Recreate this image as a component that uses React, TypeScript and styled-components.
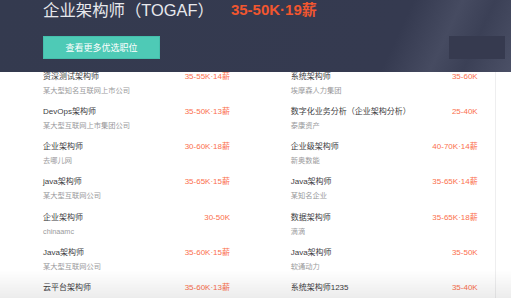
import React from "react";
import styled, { createGlobalStyle } from "styled-components";

const Global = createGlobalStyle`
  html, body { margin: 0; padding: 0; background: #ffffff; overflow: hidden; }
  body { font-family: "Liberation Sans", "Noto Sans CJK SC", sans-serif; }
`;

const Page = styled.div`
  width: 511px;
  height: 298px;
  position: relative;
  overflow: hidden;
  background: #ffffff;
`;

const Header = styled.header`
  position: sticky;
  top: 0;
  z-index: 2;
  height: 72px;
  box-sizing: border-box;
  padding-left: 43px;
  padding-right: 6px;
  display: flex;
  flex-direction: column;
  background: linear-gradient(
    115deg,
    #343a4f 0%,
    #353a50 76%,
    #464b61 85%,
    #3b4056 91%,
    #4b5066 100%
  );
`;

const TitleRow = styled.div`
  display: flex;
  align-items: center;
  height: 20px;
  gap: 17px;
`;

const JobTitle = styled.h1`
  margin: 0;
  font-size: 16.4px;
  line-height: 20px;
  font-weight: 400;
  color: #e7e8ec;
  white-space: nowrap;
`;

const HeadSalary = styled.span`
  font-size: 15px;
  line-height: 20px;
  font-weight: 700;
  color: #f1562f;
  white-space: nowrap;
`;

const ActionRow = styled.div`
  margin-top: 16px;
  display: flex;
  justify-content: space-between;
  align-items: center;
`;

const MoreButton = styled.button`
  width: 117px;
  height: 23px;
  box-sizing: border-box;
  border: 1px solid #45bfac;
  background: #4ecab6;
  color: #ffffff;
  font-family: inherit;
  font-size: 9px;
  padding: 0;
  cursor: pointer;
`;

const SideBlock = styled.div`
  width: 56px;
  height: 23px;
  background: #363a4f;
`;

const Panel = styled.main`
  width: 496px;
  box-sizing: border-box;
  border-right: 1px solid #eeeeef;
  padding-left: 43px;
  min-height: 226px;
`;

const JobGrid = styled.div`
  display: grid;
  grid-template-columns: 187px 187px;
  column-gap: 60.7px;
  grid-auto-rows: 35.17px;
`;

const JobItem = styled.div`
  display: grid;
  grid-template-columns: 1fr auto;
  grid-template-rows: 10px 18px;
  align-items: center;
`;

const ItemTitle = styled.span`
  font-size: 8px;
  line-height: 10px;
  color: #3d3d3f;
  white-space: nowrap;
`;

const ItemSalary = styled.span`
  font-size: 8px;
  line-height: 10px;
  color: #fb6f4d;
  white-space: nowrap;
  text-align: right;
`;

const ItemCompany = styled.span`
  grid-column: 1 / span 2;
  font-size: 7.25px;
  line-height: 18px;
  color: #9a9a9c;
  white-space: nowrap;
`;

const BottomFade = styled.div`
  position: absolute;
  left: 0;
  right: 0;
  bottom: 0;
  height: 28px;
  z-index: 3;
  pointer-events: none;
  background: linear-gradient(rgba(0, 0, 0, 0), rgba(0, 0, 0, 0.075));
`;

type Job = { title: string; company?: string; salary: string };

const left: Job[] = [
  { title: "资深测试架构师", company: "某大型知名互联网上市公司", salary: "35-55K·14薪" },
  { title: "DevOps架构师", company: "某大型互联网上市集团公司", salary: "35-50K·13薪" },
  { title: "企业架构师", company: "去哪儿网", salary: "30-60K·18薪" },
  { title: "java架构师", company: "某大型互联网公司", salary: "35-65K·15薪" },
  { title: "企业架构师", company: "chinaamc", salary: "30-50K" },
  { title: "Java架构师", company: "某大型互联网公司", salary: "35-60K·15薪" },
  { title: "云平台架构师", salary: "35-60K·13薪" },
];

const right: Job[] = [
  { title: "系统架构师", company: "埃摩森人力集团", salary: "35-60K" },
  { title: "数字化业务分析（企业架构分析）", company: "泰康资产", salary: "25-40K" },
  { title: "企业级架构师", company: "新奥数能", salary: "40-70K·14薪" },
  { title: "Java架构师", company: "某知名企业", salary: "35-65K·14薪" },
  { title: "数据架构师", company: "滴滴", salary: "35-65K·18薪" },
  { title: "Java架构师", company: "软通动力", salary: "35-50K" },
  { title: "系统架构师1235", salary: "35-40K" },
];

const jobs: Job[] = left.flatMap((j, i) => [j, right[i]]);

export default function App() {
  return (
    <Page>
      <Global />
      <Header>
        <TitleRow>
          <JobTitle>企业架构师（TOGAF）</JobTitle>
          <HeadSalary>35-50K·19薪</HeadSalary>
        </TitleRow>
        <ActionRow>
          <MoreButton>查看更多优选职位</MoreButton>
          <SideBlock />
        </ActionRow>
      </Header>
      <Panel>
        <JobGrid>
          {jobs.map((job, i) => (
            <JobItem key={i}>
              <ItemTitle>{job.title}</ItemTitle>
              <ItemSalary>{job.salary}</ItemSalary>
              {job.company && <ItemCompany>{job.company}</ItemCompany>}
            </JobItem>
          ))}
        </JobGrid>
      </Panel>
      <BottomFade />
    </Page>
  );
}
